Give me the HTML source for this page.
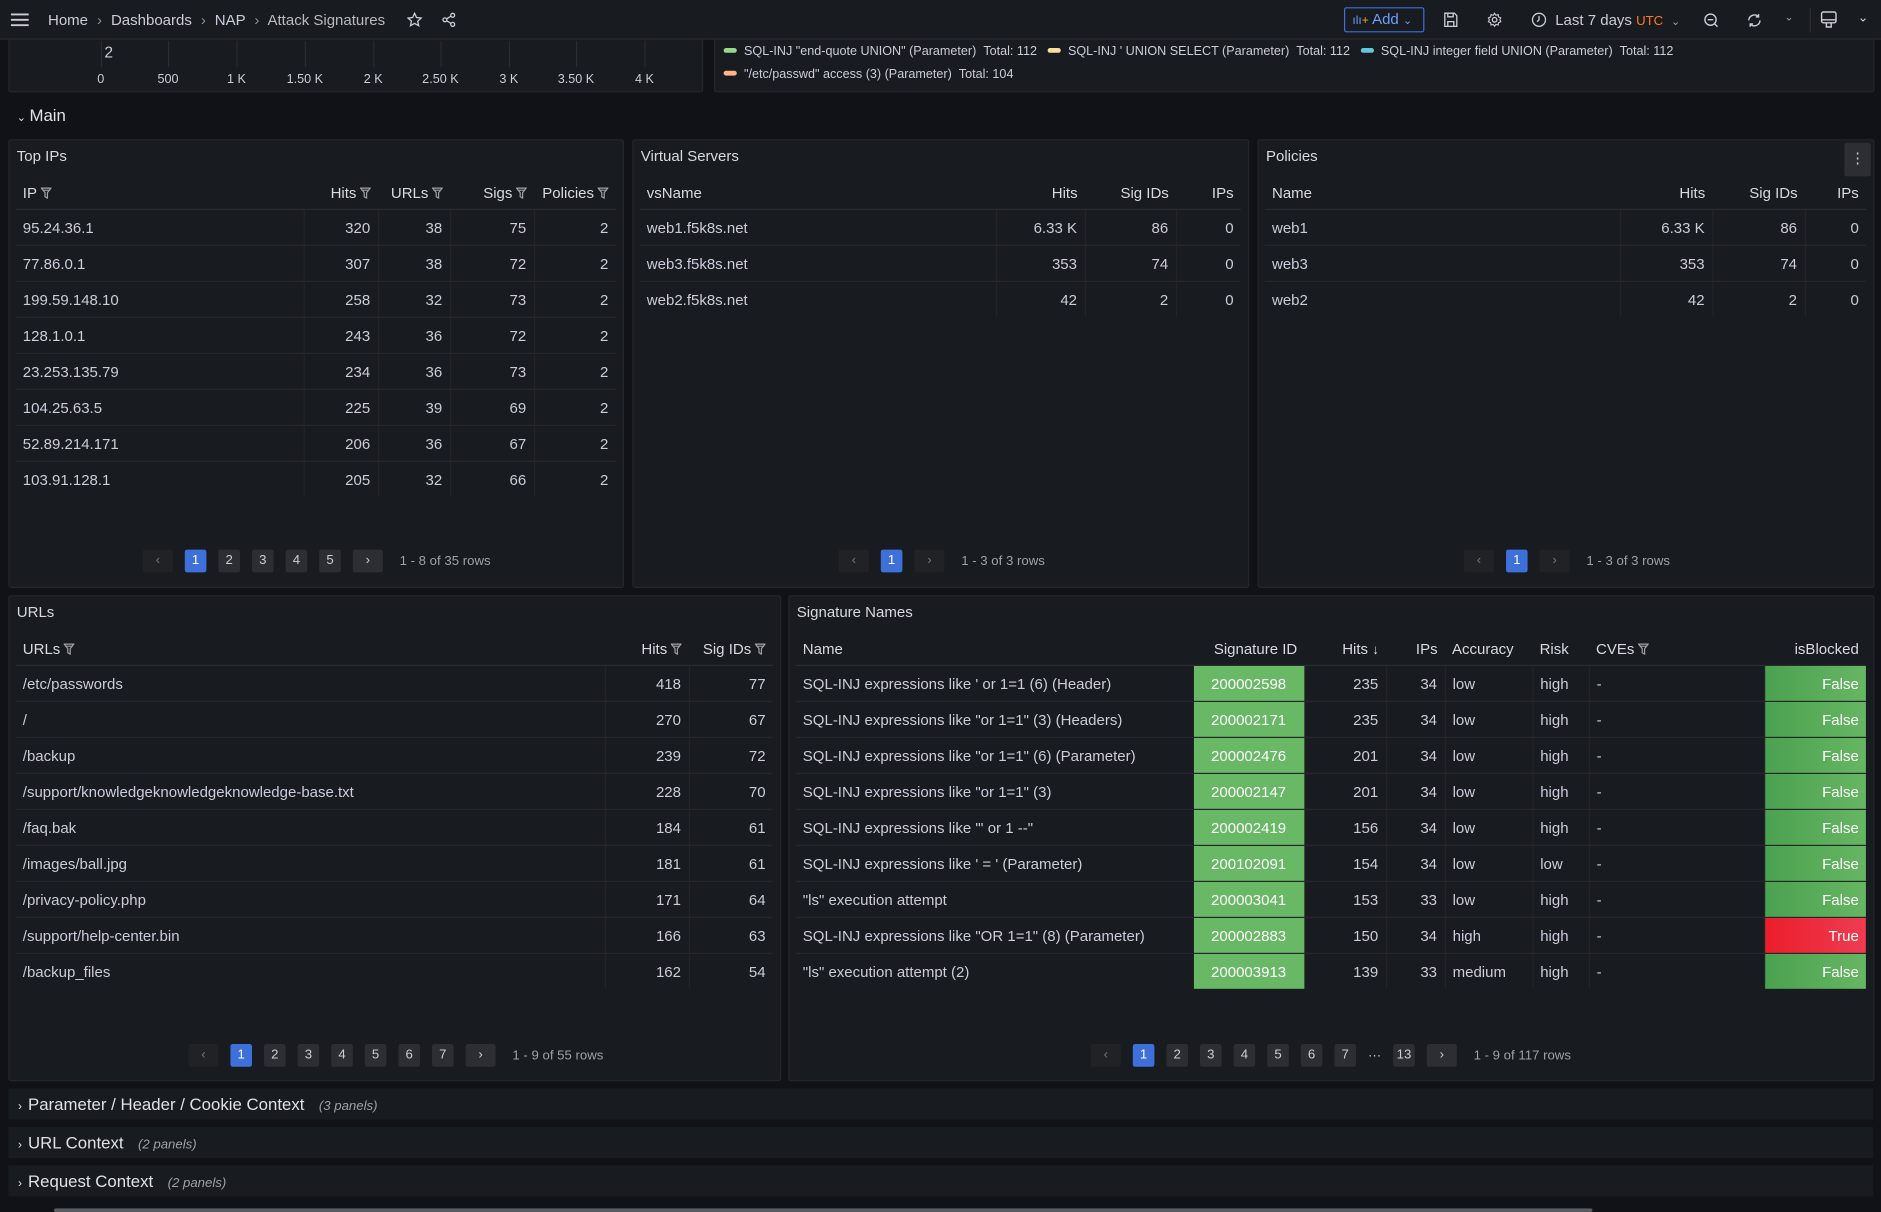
<!DOCTYPE html>
<html><head><meta charset="utf-8">
<style>
html,body{margin:0;padding:0;background:#111217;width:1881px;height:1212px;overflow:hidden}
#w{position:absolute;left:0;top:0;width:1568px;height:1010px;transform:scale(1.2);transform-origin:0 0;font-family:"Liberation Sans",sans-serif;color:#ccccdc;font-size:12.5px}
.p{position:absolute;background:#181b1f;border:1px solid #24262b;border-radius:2px;box-sizing:border-box}
.tt{position:absolute;left:6px;top:6px;font-size:12.5px;font-weight:normal;color:#d8d9e3}
table{position:absolute;border-collapse:collapse;table-layout:fixed}
th{height:26px;font-weight:normal;color:#d8d9e3;text-align:right;padding:0 6px;border-bottom:1px solid #2a2c31;white-space:nowrap;font-size:12.5px}
th.l{text-align:left}
td{height:29px;padding:0 6px;border-bottom:1px solid #25272c;text-align:right;white-space:nowrap;overflow:hidden}
td.l{text-align:left}
td+td{border-left:1px solid #222429}
.f{display:inline-block;width:9px;height:10px;vertical-align:-1px;margin-left:3px}
.pg{position:absolute;display:flex;align-items:center;font-size:11px}
.pg b{display:inline-block;height:19px;line-height:19px;min-width:18px;text-align:center;background:#2c2e33;color:#ccccdc;border-radius:2px;margin-right:10px;font-weight:normal}
.pg b.a{background:#3d71d9;color:#fff}
.pg b.n{min-width:25px;background:#2c2e33}
.pg b.d{background:#202226;color:#777}
.pg span{color:#9fa1a8;margin-left:4px}
.g{background:linear-gradient(90deg,#4aa14f,#66b663);color:#fff}
.s{background:#68b866;color:#fff;text-align:center!important}
.r{background:linear-gradient(90deg,#ec1d2a,#ee3c52);color:#fff}
.row{position:absolute;left:7px;width:1554px;height:26px;background:#181b1f;font-size:14px;font-weight:normal;color:#e0e1ea;line-height:26px}
.row i{font-size:11px;color:#9fa1a8;font-weight:normal;margin-left:12px}
.nav{position:absolute;left:0;top:0;width:1568px;height:33px;background:#181b1f;border-bottom:1px solid #2a2c31;box-sizing:border-box}
.ax{position:absolute;top:60px;font-size:10.5px;color:#ccccdc;transform:translateX(-50%)}
.gl{position:absolute;top:34px;height:22px;width:1px;background:#2a2c31}
.lg{position:absolute;font-size:10.5px;color:#ccccdc;white-space:nowrap}
.lg u{display:inline-block;width:11px;height:4px;border-radius:2px;vertical-align:2px;margin-right:6px;text-decoration:none}
</style></head><body><div id="w">
<svg width="0" height="0" style="position:absolute"><defs><symbol id="fn" viewBox="0 0 9 10"><path d="M0.5 0.8H8.5L5.5 4.5V9L3.5 8V4.5Z" fill="none" stroke="#9fa1a8" stroke-width="1"/><path d="M1.5 2.5H7.5" stroke="#9fa1a8"/></symbol></defs></svg>

<div class="p" style="left:7px;top:20px;width:579px;height:57px"></div>
<div class="p" style="left:595px;top:20px;width:967px;height:57px"></div>
<div class="gl" style="left:84px"></div><div class="gl" style="left:140px"></div><div class="gl" style="left:197px"></div><div class="gl" style="left:254px"></div><div class="gl" style="left:311px"></div><div class="gl" style="left:367px"></div><div class="gl" style="left:424px"></div><div class="gl" style="left:480px"></div><div class="gl" style="left:537px"></div>
<div style="position:absolute;left:87px;top:36px;font-size:13px">2</div>
<div class="ax" style="left:84px">0</div><div class="ax" style="left:140px">500</div><div class="ax" style="left:197px">1 K</div><div class="ax" style="left:254px">1.50 K</div><div class="ax" style="left:311px">2 K</div><div class="ax" style="left:367px">2.50 K</div><div class="ax" style="left:424px">3 K</div><div class="ax" style="left:480px">3.50 K</div><div class="ax" style="left:537px">4 K</div>
<div class="lg" style="left:603px;top:37px"><u style="background:#96d98d"></u>SQL-INJ "end-quote UNION" (Parameter)&nbsp;&nbsp;Total: 112&nbsp;&nbsp;&nbsp;<u style="background:#fade9a"></u>SQL-INJ ' UNION SELECT (Parameter)&nbsp;&nbsp;Total: 112&nbsp;&nbsp;&nbsp;<u style="background:#65c5db"></u>SQL-INJ integer field UNION (Parameter)&nbsp;&nbsp;Total: 112</div>
<div class="lg" style="left:603px;top:56px"><u style="background:#ffb387"></u>"/etc/passwd" access (3) (Parameter)&nbsp;&nbsp;Total: 104</div>

<div class="nav">
<svg style="position:absolute;left:9px;top:11px" width="15" height="11"><path d="M0 1H15M0 5.5H15M0 10H15" stroke="#ccccdc" stroke-width="1.6"/></svg>
<div style="position:absolute;left:40px;top:10px;font-size:12.5px;white-space:nowrap">Home <span style="color:#8e9099;margin:0 4px">›</span> Dashboards <span style="color:#8e9099;margin:0 4px">›</span> NAP <span style="color:#8e9099;margin:0 4px">›</span> <span style="color:#b8b9c2">Attack Signatures</span></div>
<svg style="position:absolute;left:339px;top:10px" width="13" height="13" viewBox="0 0 24 24"><path d="M12 2l3 6.5 7 .8-5.2 4.8 1.5 7L12 17.5 5.7 21l1.5-7L2 9.3l7-.8z" fill="none" stroke="#ccccdc" stroke-width="2"/></svg>
<svg style="position:absolute;left:367px;top:10px" width="14" height="13" viewBox="0 0 24 24"><circle cx="18" cy="5" r="3" fill="none" stroke="#ccccdc" stroke-width="2"/><circle cx="6" cy="12" r="3" fill="none" stroke="#ccccdc" stroke-width="2"/><circle cx="18" cy="19" r="3" fill="none" stroke="#ccccdc" stroke-width="2"/><path d="M8.6 10.5l6.8-4M8.6 13.5l6.8 4" stroke="#ccccdc" stroke-width="2"/></svg>
<div style="position:absolute;left:1120px;top:6px;width:67px;height:21px;border:1px solid #3d71d9;border-radius:2px;box-sizing:border-box;color:#6e9fff;font-size:12.5px;line-height:19px"><span style="margin-left:6px;font-size:10px;color:#6e9fff">ılı<span style="color:#ff9830">+</span></span> Add <span style="font-size:9px">⌄</span></div>
<svg style="position:absolute;left:1203px;top:10px" width="12" height="13" viewBox="0 0 12 13"><path d="M1 1H9L11 3V12H1Z M3.5 1V4H8V1 M3.5 12V8H8.5V12" fill="none" stroke="#ccccdc" stroke-width="1.1"/></svg>
<svg style="position:absolute;left:1239px;top:10px" width="13" height="13" viewBox="0 0 24 24"><circle cx="12" cy="12" r="3.5" fill="none" stroke="#ccccdc" stroke-width="2"/><path d="M12 2l2 3 3.5-1 .5 3.5 3.5 1.5-1.5 3 1.5 3-3.5 1.5-.5 3.5-3.5-1-2 3-2-3-3.5 1-.5-3.5L2.5 15l1.5-3-1.5-3L6 7.5 6.5 4 10 5z" fill="none" stroke="#ccccdc" stroke-width="1.7"/></svg>
<svg style="position:absolute;left:1276px;top:10px" width="13" height="13" viewBox="0 0 24 24"><circle cx="12" cy="12" r="10" fill="none" stroke="#ccccdc" stroke-width="2"/><path d="M12 6V12L9 15" fill="none" stroke="#ccccdc" stroke-width="2"/></svg>
<div style="position:absolute;left:1296px;top:10px;font-size:12.5px;white-space:nowrap">Last 7 days <span style="color:#ff7a1a;font-size:11px">UTC</span> <span style="font-size:9px;color:#9fa1a8;margin-left:3px">⌄</span></div>
<svg style="position:absolute;left:1419px;top:10px" width="14" height="14" viewBox="0 0 24 24"><circle cx="11" cy="11" r="8" fill="none" stroke="#ccccdc" stroke-width="2"/><path d="M7 11H15M17 17L21 21" stroke="#ccccdc" stroke-width="2"/></svg>
<svg style="position:absolute;left:1455px;top:10px" width="14" height="14" viewBox="0 0 24 24"><path d="M20 12a8 8 0 0 1-14 5M4 12a8 8 0 0 1 14-5M18 3v4h-4M6 21v-4h4" fill="none" stroke="#ccccdc" stroke-width="2"/></svg>
<div style="position:absolute;left:1487px;top:9px;font-size:9px;color:#9fa1a8">⌄</div>
<div style="position:absolute;left:1508px;top:7px;width:1px;height:20px;background:#2f3136"></div>
<svg style="position:absolute;left:1517px;top:9px" width="14" height="15" viewBox="0 0 14 15"><rect x="1" y="1" width="12" height="9" rx="1.5" fill="none" stroke="#ccccdc" stroke-width="1.2"/><path d="M1 7.5H13M5 10V13.5H9V10" fill="none" stroke="#ccccdc" stroke-width="1.2"/></svg>
<div style="position:absolute;left:1548px;top:8px;font-size:11px;color:#ccccdc">⌄</div>
</div>

<div style="position:absolute;left:14px;top:88px;font-size:14px;color:#e0e1ea"><span style="font-size:9px;margin-right:3px">⌄</span>Main</div>

<div class="p" style="left:7px;top:116px;width:513px;height:374px"><div class="tt">Top IPs</div>
<table style="left:5px;top:31px;width:500px"><colgroup><col style="width:240px"><col style="width:62px"><col style="width:60px"><col style="width:70px"><col style="width:68px"></colgroup>
<tr><th class="l">IP<svg class="f"><use href="#fn"/></svg></th><th>Hits<svg class="f"><use href="#fn"/></svg></th><th>URLs<svg class="f"><use href="#fn"/></svg></th><th>Sigs<svg class="f"><use href="#fn"/></svg></th><th>Policies<svg class="f"><use href="#fn"/></svg></th></tr>
<tr><td class="l">95.24.36.1</td><td>320</td><td>38</td><td>75</td><td>2</td></tr>
<tr><td class="l">77.86.0.1</td><td>307</td><td>38</td><td>72</td><td>2</td></tr>
<tr><td class="l">199.59.148.10</td><td>258</td><td>32</td><td>73</td><td>2</td></tr>
<tr><td class="l">128.1.0.1</td><td>243</td><td>36</td><td>72</td><td>2</td></tr>
<tr><td class="l">23.253.135.79</td><td>234</td><td>36</td><td>73</td><td>2</td></tr>
<tr><td class="l">104.25.63.5</td><td>225</td><td>39</td><td>69</td><td>2</td></tr>
<tr><td class="l">52.89.214.171</td><td>206</td><td>36</td><td>67</td><td>2</td></tr>
<tr><td class="l" style="border-bottom:0">103.91.128.1</td><td style="border-bottom:0">205</td><td style="border-bottom:0">32</td><td style="border-bottom:0">66</td><td style="border-bottom:0">2</td></tr>
</table>
<div class="pg" style="left:111px;top:341px"><b class="n d">‹</b><b class="a">1</b><b>2</b><b>3</b><b>4</b><b>5</b><b class="n">›</b><span>1 - 8 of 35 rows</span></div>
</div>

<div class="p" style="left:527px;top:116px;width:514px;height:374px"><div class="tt">Virtual Servers</div>
<table style="left:5px;top:31px;width:501px"><colgroup><col style="width:297px"><col style="width:74px"><col style="width:76px"><col style="width:54px"></colgroup>
<tr><th class="l">vsName</th><th>Hits</th><th>Sig IDs</th><th>IPs</th></tr>
<tr><td class="l">web1.f5k8s.net</td><td>6.33 K</td><td>86</td><td>0</td></tr>
<tr><td class="l">web3.f5k8s.net</td><td>353</td><td>74</td><td>0</td></tr>
<tr><td class="l" style="border-bottom:0">web2.f5k8s.net</td><td style="border-bottom:0">42</td><td style="border-bottom:0">2</td><td style="border-bottom:0">0</td></tr>
</table>
<div class="pg" style="left:171px;top:341px"><b class="n d">‹</b><b class="a">1</b><b class="n d">›</b><span>1 - 3 of 3 rows</span></div>
</div>

<div class="p" style="left:1048px;top:116px;width:514px;height:374px"><div class="tt">Policies</div>
<div style="position:absolute;right:2px;top:2px;width:22px;height:28px;background:#2c2e33;border-radius:2px;color:#ccccdc;text-align:center;line-height:26px;font-size:12px">⋮</div>
<table style="left:5px;top:31px;width:501px"><colgroup><col style="width:296px"><col style="width:77px"><col style="width:77px"><col style="width:51px"></colgroup>
<tr><th class="l">Name</th><th>Hits</th><th>Sig IDs</th><th>IPs</th></tr>
<tr><td class="l">web1</td><td>6.33 K</td><td>86</td><td>0</td></tr>
<tr><td class="l">web3</td><td>353</td><td>74</td><td>0</td></tr>
<tr><td class="l" style="border-bottom:0">web2</td><td style="border-bottom:0">42</td><td style="border-bottom:0">2</td><td style="border-bottom:0">0</td></tr>
</table>
<div class="pg" style="left:171px;top:341px"><b class="n d">‹</b><b class="a">1</b><b class="n d">›</b><span>1 - 3 of 3 rows</span></div>
</div>

<div class="p" style="left:7px;top:496px;width:644px;height:405px"><div class="tt">URLs</div>
<table style="left:5px;top:31px;width:631px"><colgroup><col style="width:491px"><col style="width:70px"><col style="width:70px"></colgroup>
<tr><th class="l">URLs<svg class="f"><use href="#fn"/></svg></th><th>Hits<svg class="f"><use href="#fn"/></svg></th><th>Sig IDs<svg class="f"><use href="#fn"/></svg></th></tr>
<tr><td class="l">/etc/passwords</td><td>418</td><td>77</td></tr>
<tr><td class="l">/</td><td>270</td><td>67</td></tr>
<tr><td class="l">/backup</td><td>239</td><td>72</td></tr>
<tr><td class="l">/support/knowledgeknowledgeknowledge-base.txt</td><td>228</td><td>70</td></tr>
<tr><td class="l">/faq.bak</td><td>184</td><td>61</td></tr>
<tr><td class="l">/images/ball.jpg</td><td>181</td><td>61</td></tr>
<tr><td class="l">/privacy-policy.php</td><td>171</td><td>64</td></tr>
<tr><td class="l">/support/help-center.bin</td><td>166</td><td>63</td></tr>
<tr><td class="l" style="border-bottom:0">/backup_files</td><td style="border-bottom:0">162</td><td style="border-bottom:0">54</td></tr>
</table>
<div class="pg" style="left:149px;top:373px"><b class="n d">‹</b><b class="a">1</b><b>2</b><b>3</b><b>4</b><b>5</b><b>6</b><b>7</b><b class="n">›</b><span>1 - 9 of 55 rows</span></div>
</div>

<div class="p" style="left:657px;top:496px;width:905px;height:405px"><div class="tt">Signature Names</div>
<table style="left:5px;top:31px;width:892px"><colgroup><col style="width:331px"><col style="width:93px"><col style="width:68px"><col style="width:49px"><col style="width:73px"><col style="width:47px"><col style="width:146px"><col style="width:85px"></colgroup>
<tr><th class="l">Name</th><th>Signature ID</th><th>Hits <span style="font-size:11px">↓</span></th><th>IPs</th><th class="l">Accuracy</th><th class="l">Risk</th><th class="l">CVEs<svg class="f"><use href="#fn"/></svg></th><th>isBlocked</th></tr>
<tr><td class="l">SQL-INJ expressions like ' or 1=1 (6) (Header)</td><td class="s">200002598</td><td>235</td><td>34</td><td class="l">low</td><td class="l">high</td><td class="l">-</td><td class="g">False</td></tr>
<tr><td class="l">SQL-INJ expressions like "or 1=1" (3) (Headers)</td><td class="s">200002171</td><td>235</td><td>34</td><td class="l">low</td><td class="l">high</td><td class="l">-</td><td class="g">False</td></tr>
<tr><td class="l">SQL-INJ expressions like "or 1=1" (6) (Parameter)</td><td class="s">200002476</td><td>201</td><td>34</td><td class="l">low</td><td class="l">high</td><td class="l">-</td><td class="g">False</td></tr>
<tr><td class="l">SQL-INJ expressions like "or 1=1" (3)</td><td class="s">200002147</td><td>201</td><td>34</td><td class="l">low</td><td class="l">high</td><td class="l">-</td><td class="g">False</td></tr>
<tr><td class="l">SQL-INJ expressions like "' or 1 --"</td><td class="s">200002419</td><td>156</td><td>34</td><td class="l">low</td><td class="l">high</td><td class="l">-</td><td class="g">False</td></tr>
<tr><td class="l">SQL-INJ expressions like ' = ' (Parameter)</td><td class="s">200102091</td><td>154</td><td>34</td><td class="l">low</td><td class="l">low</td><td class="l">-</td><td class="g">False</td></tr>
<tr><td class="l">"ls" execution attempt</td><td class="s">200003041</td><td>153</td><td>33</td><td class="l">low</td><td class="l">high</td><td class="l">-</td><td class="g">False</td></tr>
<tr><td class="l">SQL-INJ expressions like "OR 1=1" (8) (Parameter)</td><td class="s">200002883</td><td>150</td><td>34</td><td class="l">high</td><td class="l">high</td><td class="l">-</td><td class="r">True</td></tr>
<tr><td class="l" style="border-bottom:0">"ls" execution attempt (2)</td><td class="s" style="border-bottom:0">200003913</td><td style="border-bottom:0">139</td><td style="border-bottom:0">33</td><td class="l" style="border-bottom:0">medium</td><td class="l" style="border-bottom:0">high</td><td class="l" style="border-bottom:0">-</td><td class="g" style="border-bottom:0">False</td></tr>
</table>
<div class="pg" style="left:251px;top:373px"><b class="n d">‹</b><b class="a">1</b><b>2</b><b>3</b><b>4</b><b>5</b><b>6</b><b>7</b><span style="margin:0 10px 0 0;color:#ccccdc">···</span><b>13</b><b class="n">›</b><span>1 - 9 of 117 rows</span></div>
</div>

<div class="row" style="top:907px"><span style="font-size:10px;margin:0 5px 0 8px">›</span>Parameter / Header / Cookie Context<i>(3 panels)</i></div>
<div class="row" style="top:939px"><span style="font-size:10px;margin:0 5px 0 8px">›</span>URL Context<i>(2 panels)</i></div>
<div class="row" style="top:971px"><span style="font-size:10px;margin:0 5px 0 8px">›</span>Request Context<i>(2 panels)</i></div>
<div style="position:absolute;left:45px;top:1007px;width:1282px;height:3px;background:#5a5c63;border-radius:2px"></div>
</div></body></html>
